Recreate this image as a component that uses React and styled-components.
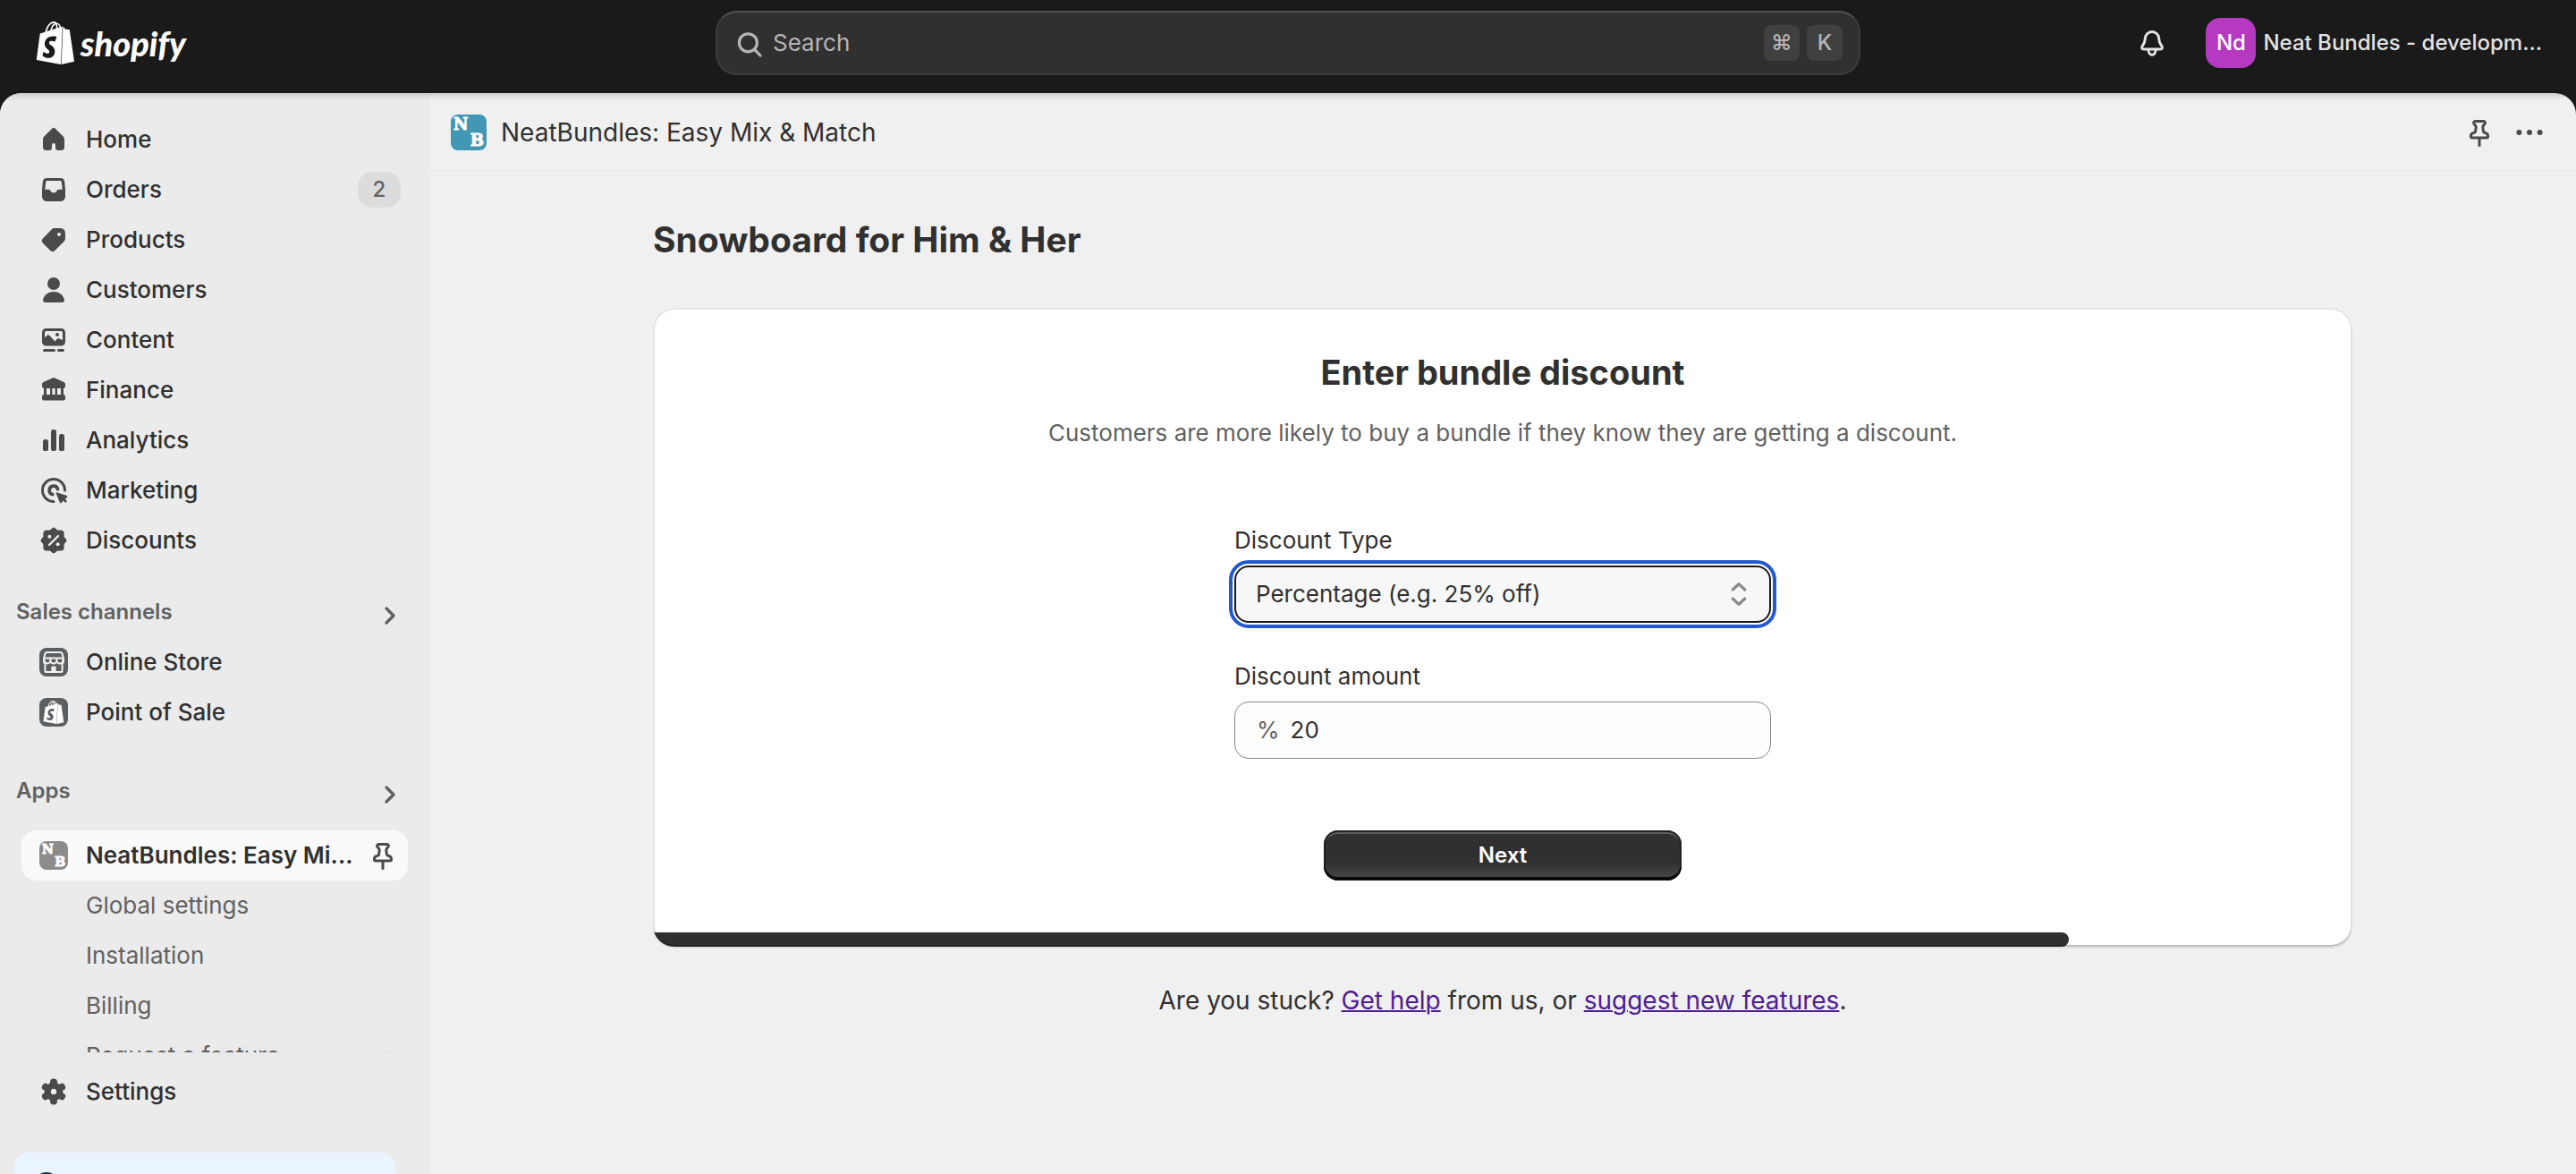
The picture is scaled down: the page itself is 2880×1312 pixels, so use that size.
import React from "react";
import styled, { createGlobalStyle } from "styled-components";
import { SiShopify } from "react-icons/si";

const GlobalStyle = createGlobalStyle`
  *, *::before, *::after { box-sizing: border-box; }
  body {
    margin: 0;
    background: #1a1a1a;
    color: #303030;
    font-family: Inter, "Liberation Sans", sans-serif;
    font-size: 26px;
    line-height: 40px;
    font-weight: 400;
  }
  button, input, select, kbd { font: inherit; color: inherit; }
  h1, h2, p, ul { margin: 0; padding: 0; }
  ul { list-style: none; }
`;

/* ---------- shell ---------- */

const Shell = styled.div`
  display: flex;
  flex-direction: column;
  height: 100vh;
  overflow: hidden;
`;

const TopBar = styled.header`
  position: relative;
  z-index: 1;
  flex: none;
  display: grid;
  grid-template-columns: minmax(0, 1fr) minmax(0, 1280px) minmax(0, 1fr);
  align-items: center;
  height: 104px;
  padding-bottom: 8px;
  background: #1a1a1a;
  box-shadow: 0 1px 8px rgba(26, 26, 26, 0.28);
`;

const Logo = styled.a`
  display: flex;
  align-items: center;
  gap: 4px;
  padding-left: 38px;
  color: #fff;
  text-decoration: none;
`;

const Wordmark = styled.span`
  font-family: Lato, "Open Sans", sans-serif;
  font-size: 38px;
  line-height: 48px;
  font-style: italic;
  font-weight: 900;
`;

const SearchBox = styled.label`
  display: flex;
  align-items: center;
  gap: 8px;
  height: 72px;
  padding: 0 18px 0 14px;
  border: 2px solid #3c3c3c;
  border-top-color: #505050;
  border-radius: 24px;
  background: #303030;
  color: #b5b5b5;
`;

const SearchInput = styled.input`
  flex: 1;
  min-width: 0;
  padding: 0;
  border: 0;
  outline: 0;
  background: transparent;
  &::placeholder { color: #b5b5b5; opacity: 1; }
`;

const Key = styled.kbd`
  width: 40px;
  height: 40px;
  border-radius: 8px;
  background: #404040;
  font-size: 24px;
  font-weight: 500;
  text-align: center;
`;

const TopActions = styled.div`
  display: flex;
  align-items: center;
  justify-content: flex-end;
  gap: 40px;
  padding-right: 38px;
`;

const PlainButton = styled.button`
  display: flex;
  align-items: center;
  gap: 8px;
  padding: 0;
  border: 0;
  background: transparent;
  color: ${(p) => p.$color || "#4a4a4a"};
  font-size: 24px;
  font-weight: 550;
  white-space: nowrap;
`;

const Avatar = styled.span`
  width: 56px;
  height: 56px;
  border-radius: 16px;
  background: #b53ac1;
  color: #fff;
  font-weight: 500;
  line-height: 56px;
  text-align: center;
`;

const Frame = styled.div`
  flex: 1;
  min-height: 0;
  display: flex;
  overflow: hidden;
  border-radius: 24px 24px 0 0;
  background: #f0f0f0;
`;

/* ---------- sidebar ---------- */

const Sidebar = styled.nav`
  flex: none;
  display: flex;
  flex-direction: column;
  width: 480px;
  background: #ebebeb;
`;

const NavScroll = styled.div`
  flex: 1;
  min-height: 0;
  overflow: hidden;
  padding: 24px 24px 0;
`;

const NavRow = styled.a`
  display: flex;
  align-items: center;
  gap: 16px;
  height: 56px;
  padding: 0 8px 0 16px;
  border-radius: 16px;
  background: ${(p) => (p.$active ? "#fafafa" : "transparent")};
  color: #303030;
  font-weight: ${(p) => (p.$active ? 600 : 550)};
  text-decoration: none;
  white-space: nowrap;
`;

const NavLabel = styled.span`
  flex: 1;
  min-width: 0;
`;

const SubRow = styled.a`
  display: flex;
  align-items: center;
  height: 56px;
  padding-left: 72px;
  color: #616161;
  text-decoration: none;
`;

const Count = styled.span`
  min-width: 48px;
  height: 40px;
  border-radius: 16px;
  background: #dcdcdc;
  color: #616161;
  font-size: 24px;
  text-align: center;
`;

const SectionButton = styled.button`
  display: flex;
  align-items: center;
  justify-content: space-between;
  width: 100%;
  height: 56px;
  margin-top: ${(p) => p.$top}px;
  margin-bottom: ${(p) => p.$bottom || 0}px;
  padding: 0;
  border: 0;
  background: transparent;
  color: #616161;
  font-size: 24px;
  font-weight: 600;
`;

const SectionArrow = styled.span`
  padding-top: 8px;
`;

const SectionWrap = styled.div`
  margin: 0 0 0 -6px;
`;

const NavBottom = styled.div`
  flex: none;
  height: 136px;
  overflow: hidden;
  padding: 16px 38px 0 16px;
`;

const NavBottomShade = styled.div`
  flex: none;
  height: 1px;
  margin-right: 40px;
  margin-bottom: -1px;
  background: #e4e4e4;
  box-shadow: 0 -2px 10px rgba(0, 0, 0, 0.08);
`;

const SettingsRow = styled(NavRow)`
  margin-bottom: 40px;
  padding-left: 24px;
`;

const Notice = styled.div`
  height: 120px;
  padding: 16px;
  border-radius: 16px;
  background: #eaf4ff;
  color: #003a5a;
`;

/* ---------- main column ---------- */

const Main = styled.main`
  flex: 1;
  min-width: 0;
`;

const TitleBar = styled.div`
  display: flex;
  align-items: center;
  gap: 16px;
  height: 88px;
  padding: 2px 32px 0 24px;
  border-bottom: 2px solid #ebebeb;
`;

const AppTitle = styled.span`
  flex: 1;
  font-size: 28px;
`;

const Page = styled.div`
  max-width: 1900px;
  margin: 0 auto;
  padding-top: 48px;
`;

const PageTitle = styled.h1`
  font-size: 39px;
  line-height: 56px;
  font-weight: 700;
`;

const Card = styled.section`
  position: relative;
  margin-top: 48px;
  overflow: hidden;
  border-radius: 24px;
  background: #fff;
  box-shadow: 0 2px 0 rgba(26, 26, 26, 0.07);

  &::after {
    content: "";
    position: absolute;
    inset: 0;
    border-radius: inherit;
    box-shadow: inset 0 0 0 2px rgba(0, 0, 0, 0.11), inset 0 -2px 0 rgba(0, 0, 0, 0.17);
    pointer-events: none;
  }
`;

const CardHead = styled.div`
  display: flex;
  flex-direction: column;
  align-items: center;
  gap: 20px;
  padding: 44px 32px 80px;
  text-align: center;
`;

const CardTitle = styled.h2`
  font-size: 38px;
  line-height: 56px;
  font-weight: 700;
`;

const CardText = styled.p`
  color: #616161;
`;

const Form = styled.form`
  display: flex;
  flex-direction: column;
  gap: 40px;
  width: 600px;
  margin: 0 auto;
`;

const Field = styled.div`
  display: flex;
  flex-direction: column;
  gap: 8px;
`;

const SelectBox = styled.div`
  display: grid;
  align-items: center;
  & > * { grid-area: 1 / 1; }
  & > svg {
    justify-self: end;
    margin-right: 16px;
    color: #8a8a8a;
    pointer-events: none;
  }
`;

const Select = styled.select`
  appearance: none;
  width: 100%;
  height: 64px;
  padding: 0 64px 0 22px;
  border: 2px solid #1a1a1a;
  border-radius: 16px;
  outline: 4px solid #2259d0;
  outline-offset: 2px;
  background: #f7f7f7;
`;

const InputBox = styled.div`
  display: flex;
  align-items: center;
  gap: 12px;
  height: 64px;
  padding: 0 24px;
  border: 1px solid #8a8a8a;
  border-radius: 16px;
  background: #fdfdfd;
`;

const Prefix = styled.span`
  color: #616161;
`;

const AmountInput = styled.input`
  flex: 1;
  min-width: 0;
  padding: 0;
  border: 0;
  outline: 0;
  background: transparent;
`;

const NextButton = styled.button`
  align-self: center;
  width: 400px;
  height: 56px;
  margin: 40px 0 58px;
  border: 0;
  border-radius: 16px;
  background: linear-gradient(#303030 63%, #4a4a4a);
  box-shadow: inset 0 -4px 0 #0b0b0b, inset 0 0 0 2px #1f1f1f, inset 0 4px 0 #5e5e5e;
  color: #fff;
  font-size: 24px;
  font-weight: 600;
`;

const Progress = styled.div`
  height: 16px;
`;

const ProgressFill = styled.div`
  height: 100%;
  border-radius: 0 8px 8px 0;
  background: #303030;
`;

const Help = styled.p`
  margin-top: 40px;
  font-size: 28px;
  text-align: center;
`;

const HelpLink = styled.a`
  color: #4f1d91;
  text-decoration: underline;
  text-decoration-thickness: 2px;
`;

/* ---------- icons ---------- */

const IconSvg = styled.svg`
  flex: none;
  display: block;
  width: ${(p) => p.$size || 40}px;
  height: ${(p) => p.$size || 40}px;
`;

const Icon = ({ children, size, color = "#4a4a4a" }) => (
  <IconSvg viewBox="0 0 20 20" $size={size} fill={color} aria-hidden="true">
    {children}
  </IconSvg>
);

const line = { fill: "none", strokeWidth: 1.5, strokeLinecap: "round", strokeLinejoin: "round" };

const HomeIcon = () => (
  <Icon>
    <path d="M8.94 3.94a1.5 1.5 0 0 1 2.12 0l4.28 4.28c.42.42.66 1 .66 1.6v4.43A1.75 1.75 0 0 1 14.25 16H12.2a1.2 1.2 0 0 1-1.2-1.2V13a1 1 0 1 0-2 0v1.8A1.2 1.2 0 0 1 7.8 16H5.75A1.75 1.75 0 0 1 4 14.25V9.82c0-.6.24-1.18.66-1.6z" />
  </Icon>
);

const OrdersIcon = () => (
  <Icon>
    <path
      fillRule="evenodd"
      d="M6.1 3.5h7.8a2.2 2.2 0 0 1 2.15 1.8l.45 4.6v3.85a2.75 2.75 0 0 1-2.75 2.75h-7.5a2.75 2.75 0 0 1-2.75-2.75V9.9l.45-4.6A2.2 2.2 0 0 1 6.1 3.5zM6.4 5c-.4 0-.7.25-.75.65L5.1 9.9h1.9c.7 0 1.1.3 1.3.8.3.6.9 1 1.7 1s1.4-.4 1.7-1c.2-.5.6-.8 1.3-.8h1.9l-.55-4.25C14.3 5.25 14 5 13.6 5z"
    />
  </Icon>
);

const ProductsIcon = () => (
  <Icon>
    <path
      fillRule="evenodd"
      d="M10.6 3.5h3.15a2.75 2.75 0 0 1 2.75 2.75v2.9c0 .66-.26 1.3-.73 1.76l-4.95 5a2 2 0 0 1-2.84 0l-3.9-3.9a2 2 0 0 1 0-2.84l4.75-4.95c.47-.46 1.1-.72 1.77-.72zM13 8a1 1 0 1 0 0-2 1 1 0 0 0 0 2z"
    />
  </Icon>
);

const CustomersIcon = () => (
  <Icon>
    <circle cx="10" cy="6.5" r="3.5" />
    <path d="M10 11c-2.8 0-5 1.5-5.9 4.2-.3 1 .3 1.8 1.2 1.8h9.4c.9 0 1.5-.8 1.2-1.8C15 12.5 12.8 11 10 11z" />
  </Icon>
);

const ContentIcon = () => (
  <Icon>
    <path
      fillRule="evenodd"
      d="M5.75 3.5h8.5a2.25 2.25 0 0 1 2.25 2.25V11a2.25 2.25 0 0 1-2.25 2.25h-8.500A2.25 2.25 0 0 1 3.5 11V5.750A2.25 2.25 0 0 1 5.75 3.5zM5.9 5a.9.9 0 0 0-.9.9v2.7l1.3-1.100a1 1 0 0 1 1.400 0l3 3.200 1.200-1.300a1 1 0 0 1 1.500 0l1.600.6V5.900a.9.9 0 0 0-.9-.9z"
    />
    <circle cx="12" cy="7" r="1" />
    <rect x="4" y="15" width="7" height="1.5" rx=".75" />
    <rect x="12" y="15" width="4" height="1.5" rx=".75" />
  </Icon>
);

const FinanceIcon = () => (
  <Icon>
    <path d="M9.3 3.2a1.6 1.6 0 0 1 1.4 0l5 2.3c.5.2.8.7.8 1.2v1.2c0 .6-.5 1.1-1.1 1.1H4.6c-.6 0-1.1-.5-1.1-1.1V6.700c0-.5.3-1 .8-1.200z" />
    <path d="M4.500 8.500H6V13H4.500zM8 8.500h1.200V13H8zM10.800 8.500H12V13h-1.200zM14 8.500h1.500V13H14z" />
    <rect x="3.5" y="12.5" width="13" height="3.2" rx="1" />
  </Icon>
);

const AnalyticsIcon = () => (
  <Icon>
    <rect x="4" y="9.5" width="3" height="6.5" rx="1.3" />
    <rect x="8.500" y="4" width="3" height="12" rx="1.3" />
    <rect x="13" y="6.500" width="3" height="9.500" rx="1.3" />
  </Icon>
);

const MarketingIcon = () => (
  <Icon>
    <path d="M16.250 10A6.250 6.250 0 1 0 10 16.250" stroke="#4a4a4a" {...line} />
    <path d="M12.300 9.400A2.400 2.400 0 1 0 9.400 12.300" stroke="#4a4a4a" {...line} strokeWidth="1.8" />
    <path d="M12 11.200l5.200 1.700c.6.200.6.900.1 1.200l-1 .6 1 1.200c.3.400-.5 1.200-.9.900l-1.200-1-.6 1c-.3.500-1 .5-1.200-.1l-2-5c-.2-.5.200-.7.600-.5z" />
  </Icon>
);

const DiscountsIcon = () => (
  <Icon>
    <rect x="4.2" y="4.2" width="11.6" height="11.6" rx="1.8" />
    <rect x="4.5" y="4.5" width="11" height="11" rx="1.6" transform="rotate(45 10 10)" />
    <path d="M7.500 12.500l5-5" stroke="#ebebeb" {...line} strokeWidth="1.2" />
    <circle cx="7.7" cy="7.9" r="1" fill="#ebebeb" />
    <circle cx="12.3" cy="12.1" r="1" fill="#ebebeb" />
  </Icon>
);

const SettingsIcon = () => (
  <Icon>
    <circle cx="10" cy="10" r="5.2" />
    {[0, 60, 120].map((angle) => (
      <rect key={angle} x="8" y="2.8" width="4" height="14.4" rx="1.8" transform={`rotate(${angle} 10 10)`} />
    ))}
    <circle cx="10" cy="10" r="1.6" fill="#ebebeb" />
  </Icon>
);

const ChevronIcon = () => (
  <Icon color="none">
    <path d="M8 6l4 4-4 4" stroke="#616161" {...line} strokeWidth="1.7" />
  </Icon>
);

const PinIcon = () => (
  <Icon color="none">
    <g stroke="#4a4a4a" {...line}>
      <path d="M7.700 3.750h4.600c.8 0 1.200.9.700 1.500l-.8.900c-.2.300-.3.600-.3.900l.3 2.300c0 .4.300.7.700.8 1.100.2 1.900 1 1.900 2 0 .5-.3.850-.8.850H6c-.5 0-.8-.350-.8-.850 0-1 .8-1.800 1.900-2 .4-.1.700-.4.700-.8l.3-2.300c0-.3-.1-.6-.3-.9l-.8-.9c-.5-.6-.1-1.500.7-1.500z" />
      <path d="M10 13.500v3.700" />
    </g>
  </Icon>
);

const DotsIcon = () => (
  <Icon>
    <circle cx="4.2" cy="10" r="1.5" />
    <circle cx="10" cy="10" r="1.5" />
    <circle cx="15.8" cy="10" r="1.5" />
  </Icon>
);

const BellIcon = () => (
  <Icon color="none">
    <g stroke="#e3e3e3" {...line}>
      <path d="M10 3.750c-2.200 0-3.750 1.700-3.850 3.900-.1 1.800-.4 2.700-1.500 4-.8 1-.3 1.900.8 1.900h9.100c1.100 0 1.600-.9.800-1.900-1.100-1.300-1.400-2.200-1.500-4-.1-2.200-1.650-3.900-3.850-3.900z" />
      <path d="M8 13.700c0 1.700.8 2.900 2 2.900s2-1.200 2-2.900" />
    </g>
  </Icon>
);

const SearchIcon = () => (
  <Icon color="none">
    <g stroke="#b5b5b5" {...line} strokeWidth="1.6">
      <circle cx="10.2" cy="9.9" r="5" />
      <path d="M13.900 13.800l3.100 3.200" />
    </g>
  </Icon>
);

const SelectArrows = () => (
  <Icon color="none">
    <g stroke="currentColor" {...line} strokeWidth="1.6">
      <path d="M6.600 7.500L10 4.300l3.400 3.200" />
      <path d="M6.600 12.500l3.400 3.200 3.400-3.200" />
    </g>
  </Icon>
);

const StoreIcon = () => (
  <Icon>
    <rect x="2" y="2" width="16" height="16" rx="4" fill="#5c5f62" />
    <path
      d="M6.300 4.500h7.400c.6 0 1 .3 1.100.8l.7 3v1.400c0 .5-.3.900-.7 1.100v3.900c0 .5-.4.800-.8.800H6c-.5 0-.8-.3-.8-.8v-3.900c-.4-.2-.7-.6-.7-1.100V8.300l.7-3c.1-.5.500-.8 1.100-.8z"
      stroke="#f1f1f1"
      {...line}
      strokeWidth="1"
    />
    <path
      d="M4.700 7.700h10.600M8.200 7.700v1.300a1.700 1.700 0 0 1-3.400 0M11.700 7.700v1.300a1.700 1.700 0 0 1-3.500 0M15.200 7.700v1.300a1.700 1.700 0 0 1-3.500 0"
      stroke="#f1f1f1"
      {...line}
      strokeWidth="1"
    />
    <rect x="8.700" y="12.300" width="2.600" height="3" fill="#f1f1f1" />
  </Icon>
);

const IconSlot = styled.span`
  flex: none;
  display: flex;
  align-items: center;
  justify-content: center;
  width: 40px;
  height: 40px;
`;

const PosTile = styled.span`
  display: flex;
  align-items: center;
  justify-content: center;
  width: 32px;
  height: 32px;
  border-radius: 8px;
  background: #5c5f62;
  color: #fff;
`;

const AppTile = styled.span`
  flex: none;
  display: flex;
  justify-content: space-between;
  width: ${(p) => p.$size}px;
  height: ${(p) => p.$size}px;
  padding: 2px 3px;
  border-radius: 8px;
  background: ${(p) => p.$color};
  color: #fff;
  font-family: "DejaVu Serif", "Liberation Serif", serif;
  font-size: ${(p) => (p.$size > 32 ? 18 : 14)}px;
  line-height: 1;
  font-weight: 700;
  -webkit-text-stroke: 1px #fff;
  & > :last-child { align-self: flex-end; }
`;

const PosIcon = () => (
  <IconSlot>
    <PosTile>
      <SiShopify size={26} aria-hidden="true" />
    </PosTile>
  </IconSlot>
);

const AppIcon = ({ size, color }) => (
  <AppTile $size={size} $color={color}>
    <span>N</span>
    <span>B</span>
  </AppTile>
);

const mainLinks = [
  { label: "Home", Glyph: HomeIcon },
  { label: "Orders", Glyph: OrdersIcon, count: 2 },
  { label: "Products", Glyph: ProductsIcon },
  { label: "Customers", Glyph: CustomersIcon },
  { label: "Content", Glyph: ContentIcon },
  { label: "Finance", Glyph: FinanceIcon },
  { label: "Analytics", Glyph: AnalyticsIcon },
  { label: "Marketing", Glyph: MarketingIcon },
  { label: "Discounts", Glyph: DiscountsIcon },
];

const channelLinks = [
  { label: "Online Store", Glyph: StoreIcon },
  { label: "Point of Sale", Glyph: PosIcon },
];

const appLinks = ["Global settings", "Installation", "Billing", "Request a feature"];

const NavList = ({ items }) => (
  <ul>
    {items.map(({ label, Glyph, count }) => (
      <li key={label}>
        <NavRow href="#">
          <Glyph />
          <NavLabel>{label}</NavLabel>
          {count && <Count>{count}</Count>}
        </NavRow>
      </li>
    ))}
  </ul>
);

const SectionHeading = ({ title, top, bottom }) => (
  <SectionWrap>
    <SectionButton type="button" $top={top} $bottom={bottom}>
      {title}
      <SectionArrow>
        <ChevronIcon />
      </SectionArrow>
    </SectionButton>
  </SectionWrap>
);

export default function App() {
  const step = 5;
  const steps = 6;

  return (
    <Shell>
      <GlobalStyle />
      <TopBar>
        <Logo href="#">
          <SiShopify size={48} aria-hidden="true" />
          <Wordmark>shopify</Wordmark>
        </Logo>
        <SearchBox>
          <SearchIcon />
          <SearchInput type="text" placeholder="Search" aria-label="Search" />
          <Key>⌘</Key>
          <Key>K</Key>
        </SearchBox>
        <TopActions>
          <PlainButton type="button" aria-label="Notifications">
            <BellIcon />
          </PlainButton>
          <PlainButton type="button" $color="#e3e3e3">
            <Avatar>Nd</Avatar>
            Neat Bundles - developm...
          </PlainButton>
        </TopActions>
      </TopBar>

      <Frame>
        <Sidebar>
          <NavScroll>
            <NavList items={mainLinks} />
            <SectionHeading title="Sales channels" top={24} />
            <NavList items={channelLinks} />
            <SectionHeading title="Apps" top={32} bottom={16} />
            <NavRow href="#" $active>
              <IconSlot>
                <AppIcon size={32} color="#8c8c8c" />
              </IconSlot>
              <NavLabel>NeatBundles: Easy Mi...</NavLabel>
              <PinIcon />
            </NavRow>
            <ul>
              {appLinks.map((label) => (
                <li key={label}>
                  <SubRow href="#">{label}</SubRow>
                </li>
              ))}
            </ul>
          </NavScroll>
          <NavBottomShade />
          <NavBottom>
            <SettingsRow href="#">
              <SettingsIcon />
              <NavLabel>Settings</NavLabel>
            </SettingsRow>
            <Notice>
              <Icon color="#003a5a">
                <circle cx="10" cy="10" r="7" />
              </Icon>
            </Notice>
          </NavBottom>
        </Sidebar>

        <Main>
          <TitleBar>
            <AppIcon size={40} color="#4298b4" />
            <AppTitle>NeatBundles: Easy Mix &amp; Match</AppTitle>
            <PlainButton type="button" aria-label="Pin app">
              <PinIcon />
            </PlainButton>
            <PlainButton type="button" aria-label="More actions">
              <DotsIcon />
            </PlainButton>
          </TitleBar>

          <Page>
            <PageTitle>Snowboard for Him &amp; Her</PageTitle>
            <Card>
              <CardHead>
                <CardTitle>Enter bundle discount</CardTitle>
                <CardText>
                  Customers are more likely to buy a bundle if they know they are getting a discount.
                </CardText>
              </CardHead>
              <Form onSubmit={(event) => event.preventDefault()}>
                <Field>
                  <label htmlFor="discount-type">Discount Type</label>
                  <SelectBox>
                    <Select id="discount-type" defaultValue="percentage">
                      <option value="percentage">Percentage (e.g. 25% off)</option>
                    </Select>
                    <SelectArrows />
                  </SelectBox>
                </Field>
                <Field>
                  <label htmlFor="discount-amount">Discount amount</label>
                  <InputBox>
                    <Prefix>%</Prefix>
                    <AmountInput id="discount-amount" type="text" inputMode="numeric" defaultValue="20" />
                  </InputBox>
                </Field>
                <NextButton type="submit">Next</NextButton>
              </Form>
              <Progress role="progressbar" aria-valuenow={step} aria-valuemax={steps} aria-label="Setup progress">
                <ProgressFill style={{ width: `${(step / steps) * 100}%` }} />
              </Progress>
            </Card>
            <Help>
              Are you stuck? <HelpLink href="#">Get help</HelpLink> from us, or{" "}
              <HelpLink href="#">suggest new features</HelpLink>.
            </Help>
          </Page>
        </Main>
      </Frame>
    </Shell>
  );
}
